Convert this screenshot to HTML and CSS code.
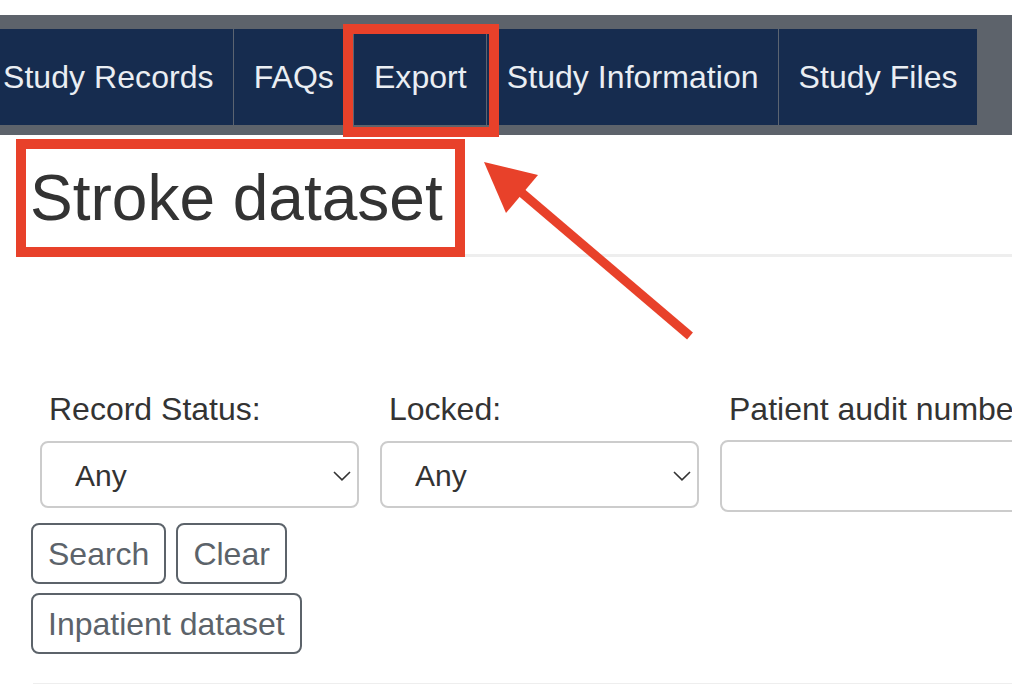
FILE: index.html
```html
<!DOCTYPE html>
<html lang="en">
<head>
<meta charset="utf-8">
<title>Stroke dataset</title>
<link rel="stylesheet" href="styles.css">
</head>
<body>
<div class="navbar">
  <ul class="nav">
    <li class="nav-item">Study Records</li>
    <li class="nav-item">FAQs</li>
    <li class="nav-item">Export</li>
    <li class="nav-item">Study Information</li>
    <li class="nav-item">Study Files</li>
  </ul>
</div>

<main class="container">
  <div class="page-header">
    <h1 class="title">Stroke dataset</h1>
  </div>

  <form class="filters">
    <div class="form-grid">
      <div class="form-group">
        <label class="form-label">Record Status:</label>
        <div class="select">
          <span class="select-value">Any</span>
          <svg class="chev" width="18" height="10" viewBox="0 0 18 10"><path d="M1 1 L9 8.8 L17 1" fill="none" stroke="#333" stroke-width="1.6"/></svg>
        </div>
      </div>
      <div class="form-group">
        <label class="form-label">Locked:</label>
        <div class="select">
          <span class="select-value">Any</span>
          <svg class="chev" width="18" height="10" viewBox="0 0 18 10"><path d="M1 1 L9 8.8 L17 1" fill="none" stroke="#333" stroke-width="1.6"/></svg>
        </div>
      </div>
      <div class="form-group">
        <label class="form-label">Patient audit number:</label>
        <div class="text-input"></div>
      </div>
    </div>

    <div class="btn-row">
      <button type="button" class="btn">Search</button>
      <button type="button" class="btn">Clear</button>
    </div>
    <div class="btn-row second">
      <button type="button" class="btn">Inpatient dataset</button>
    </div>
  </form>

  <hr class="rule">
</main>

<div class="highlight hl-export"></div>
<div class="highlight hl-title"></div>
<svg class="arrow" width="1012" height="684" viewBox="0 0 1012 684">
  <line x1="515" y1="187" x2="690" y2="336" stroke="#e8412a" stroke-width="9"/>
  <polygon points="484,162 538,175 506,213" fill="#e8412a"/>
</svg>
</body>
</html>
```

FILE: styles.css
```css
html, body {
  margin: 0;
  padding: 0;
  overflow: hidden;
  background: #fff;
}

body {
  font-family: "Liberation Sans", Arial, Helvetica, sans-serif;
  color: #333;
  width: 1012px;
  height: 684px;
  position: relative;
}

/* top navigation */
.navbar {
  margin-top: 15px;
  background: #5d636b;
  padding: 14px 0 10px 0;
}

.nav {
  list-style: none;
  margin: 0 0 0 -16.5px;
  padding: 0;
  display: flex;
  width: fit-content;
  background: #162c4f;
}

.nav-item {
  padding: 0 19.5px;
  height: 96px;
  line-height: 96px;
  font-size: 32px;
  letter-spacing: 0.06px;
  color: #eaeef3;
  white-space: nowrap;
  border-right: 1px solid #5b6471;
}

.nav-item:last-child {
  border-right: none;
}

/* content */
.container {
  padding-left: 31px;
}

.page-header {
  margin-top: 28px;
  padding-bottom: 21px;
  border-bottom: 3px solid #eeeeee;
  margin-left: -1px;
}

.title {
  margin: 0;
  font-size: 64px;
  font-weight: 400;
  line-height: 70px;
  color: #333;
}

.filters {
  margin-top: 133px;
}

.form-grid {
  display: grid;
  grid-template-columns: 319px 319px 319px;
  column-gap: 21px;
  margin-left: 9px;
  align-items: start;
}

.form-group {
  display: flex;
  flex-direction: column;
}

.form-label {
  font-size: 32px;
  line-height: 38px;
  padding-left: 9px;
  margin-bottom: 13px;
  white-space: nowrap;
  color: #333;
}

.select {
  box-sizing: border-box;
  height: 67px;
  border: 2px solid #cccccc;
  border-radius: 8px;
  display: flex;
  align-items: center;
  justify-content: space-between;
  padding: 0 6px 0 33px;
}

.select-value {
  font-size: 30px;
  color: #333;
  padding-top: 3px;
}

.chev {
  display: block;
  margin-top: 2px;
}

.text-input {
  box-sizing: border-box;
  height: 72px;
  border: 2px solid #cccccc;
  border-radius: 8px;
  margin-top: -1px;
}

.btn-row {
  display: flex;
  gap: 10px;
  margin-top: 11px;
}

.btn-row.second {
  margin-top: 9px;
}

.btn {
  font-family: "Liberation Sans", Arial, Helvetica, sans-serif;
  font-size: 32px;
  line-height: 38px;
  padding: 9.5px 15px;
  border: 2px solid #5c636a;
  border-radius: 8px;
  background: #fff;
  color: #5c636a;
  margin: 0;
}

.rule {
  margin: 29px 0 0 2px;
  border: 0;
  border-top: 2px solid #eeeeee;
  height: 0;
}

/* annotation overlays */
.highlight {
  position: absolute;
  box-sizing: border-box;
  border: 10px solid #e8412a;
}

.hl-export {
  left: 343px;
  top: 24px;
  width: 156px;
  height: 113px;
}

.hl-title {
  left: 16px;
  top: 139px;
  width: 449px;
  height: 118px;
}

.arrow {
  position: absolute;
  left: 0;
  top: 0;
  pointer-events: none;
}
```
